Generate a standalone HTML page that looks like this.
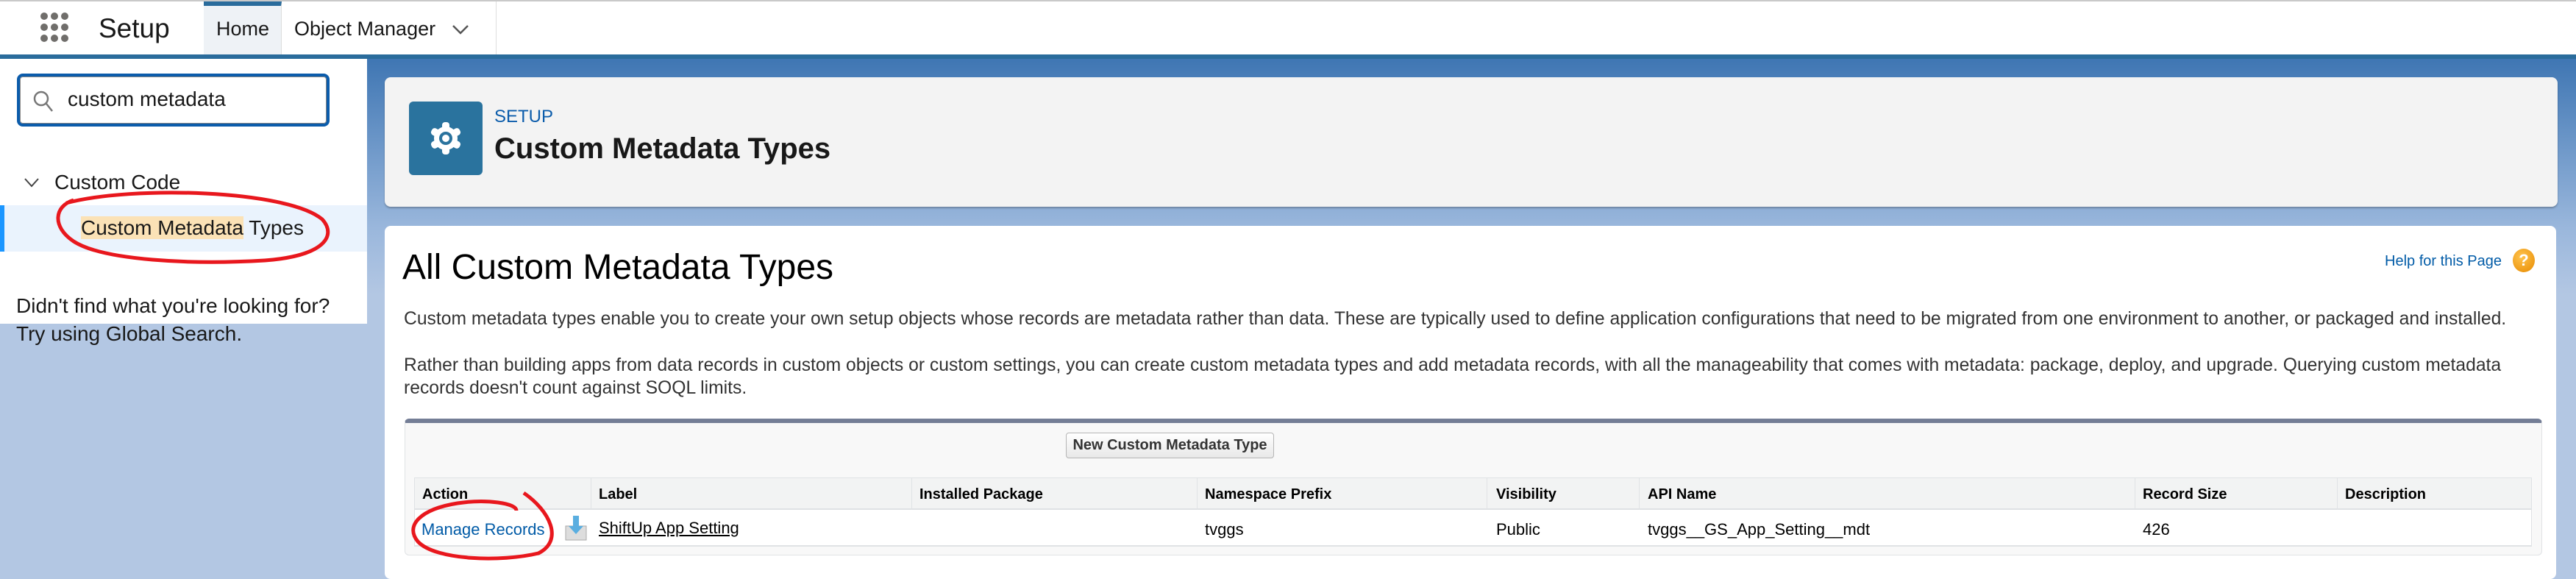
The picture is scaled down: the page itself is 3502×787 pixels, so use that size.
<!DOCTYPE html>
<html><head><meta charset="utf-8"><style>
*{margin:0;padding:0;box-sizing:border-box}
body{width:3502px;height:774px;overflow:hidden;font-family:"Liberation Sans",Arial,sans-serif;background:#b3c7e3;position:relative;color:#181818}
.a{position:absolute;white-space:nowrap}
</style></head><body>
<!-- header -->
<div class="a" style="left:0;top:0;width:3502px;height:74px;background:#fff;border-top:2px solid #c9c9c9"></div>
<div class="a" style="left:0;top:74px;width:3502px;height:6px;background:#2a6c9c"></div>
<svg class="a" style="left:54px;top:16px" width="48" height="44"><g fill="#706e6b">
<circle cx="6" cy="6" r="5"/><circle cx="20" cy="6" r="5"/><circle cx="34" cy="6" r="5"/>
<circle cx="6" cy="21" r="5"/><circle cx="20" cy="21" r="5"/><circle cx="34" cy="21" r="5"/>
<circle cx="6" cy="36" r="5"/><circle cx="20" cy="36" r="5"/><circle cx="34" cy="36" r="5"/></g></svg>
<div class="a" style="left:134px;top:18px;font-size:37px;color:#181818">Setup</div>
<div class="a" style="left:277px;top:2px;width:106px;height:72px;background:#eef2f6;border-top:6px solid #2a6c9c;border-right:1px solid #ddd"></div>
<div class="a" style="left:294px;top:24px;font-size:27px">Home</div>
<div class="a" style="left:400px;top:24px;font-size:27px">Object Manager</div>
<svg class="a" style="left:614px;top:32px" width="24" height="16"><path d="M2 3 L12 13 L22 3" stroke="#555" stroke-width="2.5" fill="none"/></svg>
<div class="a" style="left:674px;top:2px;width:1px;height:72px;background:#ddd"></div>

<!-- main bg -->
<div class="a" style="left:499px;top:80px;width:3003px;height:694px;background:linear-gradient(#3f76b3 0px,#6e98c9 120px,#9ab7dc 230px,#b3c7e3 320px)"></div>
<!-- sidebar -->
<div class="a" style="left:0;top:80px;width:499px;height:360px;background:#fff"></div>
<div class="a" style="left:23px;top:100px;width:425px;height:72px;border:4px solid #0b5cab;border-radius:8px;background:#fff;box-shadow:inset 0 0 0 1px #888"></div>
<svg class="a" style="left:44px;top:122px" width="30" height="32"><circle cx="12" cy="12" r="9" stroke="#777" stroke-width="2.5" fill="none"/><path d="M19 19 L27 29" stroke="#777" stroke-width="2.5"/></svg>
<div class="a" style="left:92px;top:119px;font-size:28px">custom metadata</div>
<svg class="a" style="left:32px;top:240px" width="22" height="16"><path d="M2 3 L11 13 L20 3" stroke="#444" stroke-width="2" fill="none"/></svg>
<div class="a" style="left:74px;top:232px;font-size:28px;color:#181818">Custom Code</div>
<div class="a" style="left:0;top:279px;width:499px;height:63px;background:#eaf3fd"></div>
<div class="a" style="left:0;top:279px;width:6px;height:63px;background:#1b96ff"></div>
<div class="a" style="left:110px;top:294px;font-size:28px"><span style="background:#fbe2b6">Custom Metadata</span> Types</div>
<svg class="a" style="left:60px;top:258px" width="400" height="104"><path d="M30 18 C120 -6 330 0 378 40 C398 62 382 90 300 96 C200 102 80 96 40 70 C10 50 14 22 40 14" stroke="#e8171d" stroke-width="5" fill="none"/></svg>
<div class="a" style="left:22px;top:400px;font-size:28px">Didn't find what you're looking for?</div>
<div class="a" style="left:22px;top:438px;font-size:28px">Try using Global Search.</div>

<!-- header card -->
<div class="a" style="left:523px;top:105px;width:2954px;height:176px;background:#f3f3f3;border-radius:8px;box-shadow:0 2px 2px rgba(0,0,0,.25)"></div>
<div class="a" style="left:556px;top:138px;width:100px;height:100px;background:#2a739e;border-radius:6px"></div>
<svg class="a" style="left:576px;top:158px" width="60" height="60" viewBox="0 0 60 60"><g fill="#fff">
<rect x="25" y="8" width="10" height="44" rx="4"/>
<rect x="25" y="8" width="10" height="44" rx="4" transform="rotate(60 30 30)"/>
<rect x="25" y="8" width="10" height="44" rx="4" transform="rotate(120 30 30)"/>
<circle cx="30" cy="30" r="16"/></g>
<circle cx="30" cy="30" r="9" fill="#2a739e"/><circle cx="30" cy="30" r="5" fill="#fff"/></svg>
<div class="a" style="left:672px;top:145px;font-size:24px;color:#0b5cab">SETUP</div>
<div class="a" style="left:672px;top:180px;font-size:40px;font-weight:bold">Custom Metadata Types</div>

<!-- content card -->
<div class="a" style="left:523px;top:307px;width:2952px;height:480px;background:#fff;border-radius:8px"></div>
<div class="a" style="left:547px;top:336px;font-size:48px;color:#000">All Custom Metadata Types</div>
<div class="a" style="left:3242px;top:344px;font-size:20px;color:#015ba7">Help for this Page</div>
<div class="a" style="left:3416px;top:338px;width:30px;height:32px;border-radius:50%;background:radial-gradient(circle at 40% 35%,#ffc34d,#e78a00);color:#fff;font-size:22px;font-weight:bold;text-align:center;line-height:32px">?</div>
<div class="a" style="left:549px;top:420px;font-size:24.7px;color:#333">Custom metadata types enable you to create your own setup objects whose records are metadata rather than data. These are typically used to define application configurations that need to be migrated from one environment to another, or packaged and installed.</div>
<div class="a" style="left:549px;top:483px;font-size:24.7px;color:#333">Rather than building apps from data records in custom objects or custom settings, you can create custom metadata types and add metadata records, with all the manageability that comes with metadata: package, deploy, and upgrade. Querying custom metadata</div>
<div class="a" style="left:549px;top:514px;font-size:24.7px;color:#333">records doesn't count against SOQL limits.</div>

<!-- table block -->
<div class="a" style="left:550px;top:569px;width:2906px;height:186px;background:#f8f8f8;border:1px solid #e0e3e5;border-top:6px solid #747e96;border-radius:6px"></div>
<div class="a" style="left:1449px;top:588px;width:283px;height:35px;background:linear-gradient(#fff,#e8e8e8);border:1px solid #b5b5b5;border-radius:4px;font-size:20px;font-weight:bold;text-align:center;line-height:33px;color:#333">New Custom Metadata Type</div>
<div class="a" style="left:563px;top:649px;width:2879px;height:44px;background:#f2f3f3;border:1px solid #e0e3e5;border-bottom:2px solid #dfe1e4"></div>
<div class="a" style="left:563px;top:693px;width:2879px;height:50px;background:#fff;border:1px solid #e0e3e5;border-top:none;border-bottom:2px solid #e0e3e5"></div>
<div class="a" style="left:803px;top:649px;width:1px;height:44px;background:#e0e3e5"></div>
<div class="a" style="left:1239px;top:649px;width:1px;height:44px;background:#e0e3e5"></div>
<div class="a" style="left:1627px;top:649px;width:1px;height:44px;background:#e0e3e5"></div>
<div class="a" style="left:2021px;top:649px;width:1px;height:44px;background:#e0e3e5"></div>
<div class="a" style="left:2228px;top:649px;width:1px;height:44px;background:#e0e3e5"></div>
<div class="a" style="left:2902px;top:649px;width:1px;height:44px;background:#e0e3e5"></div>
<div class="a" style="left:3177px;top:649px;width:1px;height:44px;background:#e0e3e5"></div>
<div style="font-size:20px;font-weight:bold;color:#000">
<div class="a" style="left:574px;top:661px">Action</div>
<div class="a" style="left:814px;top:661px">Label</div>
<div class="a" style="left:1250px;top:661px">Installed Package</div>
<div class="a" style="left:1638px;top:661px">Namespace Prefix</div>
<div class="a" style="left:2034px;top:661px">Visibility</div>
<div class="a" style="left:2240px;top:661px">API Name</div>
<div class="a" style="left:2913px;top:661px">Record Size</div>
<div class="a" style="left:3188px;top:661px">Description</div>
</div>
<div style="font-size:22px;color:#000">
<div class="a" style="left:573px;top:707px;color:#015ba7">Manage Records</div>
<div class="a" style="left:814px;top:705px;text-decoration:underline">ShiftUp App Setting</div>
<div class="a" style="left:1638px;top:707px">tvggs</div>
<div class="a" style="left:2034px;top:707px">Public</div>
<div class="a" style="left:2240px;top:707px">tvggs__GS_App_Setting__mdt</div>
<div class="a" style="left:2913px;top:707px">426</div>
</div>
<svg class="a" style="left:766px;top:700px" width="34" height="36"><rect x="3" y="15" width="28" height="19" fill="#ddd" stroke="#aaa"/><path d="M13 1 h8 v14 h6 l-10 11 l-10-11 h6z" fill="#5aaee0"/></svg>
<svg class="a" style="left:552px;top:664px" width="222" height="100"><path d="M160 6 C195 30 215 70 180 88 C130 100 40 98 16 72 C-2 50 20 28 70 20 C110 14 150 20 150 30" stroke="#e8171d" stroke-width="5" fill="none"/></svg>
</body></html>
